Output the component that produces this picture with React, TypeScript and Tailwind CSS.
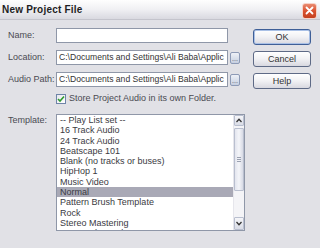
const templates = [
  "-- Play List set --",
  "16 Track Audio",
  "24 Track Audio",
  "Beatscape 101",
  "Blank (no tracks or buses)",
  "HipHop 1",
  "Music Video",
  "Normal",
  "Pattern Brush Template",
  "Rock",
  "Stereo Mastering",
  "Surround Template",
];

const path = "C:\\Documents and Settings\\Ali Baba\\Applic";

function XpButton({ label, isDefault }: { label: string; isDefault?: boolean }) {
  return (
    <div
      className={`w-[58px] h-[16px] rounded-[3px] border flex items-center justify-center text-[#333] bg-gradient-to-b from-[#ffffff] via-[#f1f1f4] to-[#d8d8e0] ${
        isDefault ? "border-[#3f5f97] shadow-[inset_0_0_0_1px_#a9c0e6]" : "border-[#5e6a86]"
      }`}
    >
      {label}
    </div>
  );
}

function BrowseButton() {
  return (
    <div className="w-[10px] h-[12px] rounded-[2px] border border-[#8d9ab6] bg-gradient-to-b from-[#eef1f7] to-[#c6cfe0] flex items-end justify-center text-[7px] leading-[7px] text-[#556] pb-[1px]">
      ...
    </div>
  );
}

function Field({ label, value, browse }: { label: string; value: string; browse?: boolean }) {
  return (
    <div className="flex items-center h-[15px]">
      <span className="w-[48px] text-[#4a4a52]">{label}</span>
      <div className="w-[172px] h-[15px] border border-[#8f97a8] bg-white flex items-center pl-[2px] overflow-hidden whitespace-nowrap text-[8.6px] text-[#333]">
        {value}
      </div>
      {browse && (
        <div className="ml-[2px]">
          <BrowseButton />
        </div>
      )}
    </div>
  );
}

export default function App() {
  return (
    <div
      className="w-[320px] h-[248px] bg-[#e1e1e6] overflow-hidden text-[9px] leading-[11px]"
      style={{ fontFamily: '"Liberation Sans", Arial, sans-serif' }}
    >
      {/* Title bar */}
      <div className="h-[20px] flex items-center justify-between pl-[2px] pr-[3px] bg-gradient-to-b from-[#fefefe] via-[#f0f0f3] to-[#d9d9e0] border-b border-[#c4c4cc]">
        <span className="text-[10px] font-bold text-[#1e1e24] tracking-[0.2px]">New Project File</span>
        <div className="w-[15px] h-[16px] mt-[2px] rounded-[3px] border border-[#f6d2c8] bg-gradient-to-b from-[#e98a6f] via-[#d9512f] to-[#c4401f] flex items-center justify-center">
          <svg width="9" height="9" viewBox="0 0 9 9">
            <path d="M1.5 1.5 L7.5 7.5 M7.5 1.5 L1.5 7.5" stroke="#fff" strokeWidth="1.8" strokeLinecap="round" />
          </svg>
        </div>
      </div>

      <div className="flex pt-[8px]">
        {/* Left column */}
        <div className="w-[253px] pl-[8px] flex flex-col">
          <div className="flex flex-col gap-[7px]">
            <Field label="Name:" value="" />
            <Field label="Location:" value={path} browse />
            <Field label="Audio Path:" value={path} browse />
          </div>

          <div className="flex items-center mt-[6px] h-[11px] pl-[48px]">
            <div className="w-[10px] h-[10px] border border-[#6f84a8] bg-gradient-to-br from-[#e6e8ee] to-[#ffffff] flex items-center justify-center">
              <svg width="8" height="8" viewBox="0 0 8 8">
                <path d="M1 4 L3 6 L7 1.5" stroke="#2e9a2e" strokeWidth="1.6" fill="none" />
              </svg>
            </div>
            <span className="ml-[3px] text-[#4a4a52]">Store Project Audio in its own Folder.</span>
          </div>

          <div className="flex mt-[10px]">
            <span className="w-[48px] pt-[1px] text-[#4a4a52]">Template:</span>
            <div className="w-[189px] h-[117px] border border-[#8f97a8] bg-white flex overflow-hidden">
              <div className="flex-1 flex flex-col overflow-hidden">
                {templates.map((t) => (
                  <div
                    key={t}
                    className={`h-[10.3px] shrink-0 leading-[10.3px] pl-[3px] whitespace-nowrap text-[#3a3a42] ${
                      t === "Normal" ? "bg-[#a9a9b6]" : ""
                    }`}
                  >
                    {t}
                  </div>
                ))}
              </div>
              {/* Scrollbar */}
              <div className="w-[11px] flex flex-col bg-[#f4f4f7] border-l border-[#e6e6ec]">
                <div className="h-[11px] border border-[#b9bfcf] rounded-[1px] bg-gradient-to-b from-[#f6f6f9] to-[#d9dce6] flex items-center justify-center">
                  <svg width="6" height="5" viewBox="0 0 6 5">
                    <path d="M0.5 4 L3 1.3 L5.5 4" stroke="#333" strokeWidth="1.3" fill="none" />
                  </svg>
                </div>
                <div className="mt-[2px] h-[63px] border border-[#b9bfcf] rounded-[1px] bg-gradient-to-r from-[#e3e5ee] via-[#f4f5f9] to-[#d7dae5] flex flex-col items-center justify-center gap-[1px]">
                  <div className="w-[4px] h-[1px] bg-[#9aa0b0]" />
                  <div className="w-[4px] h-[1px] bg-[#9aa0b0]" />
                  <div className="w-[4px] h-[1px] bg-[#9aa0b0]" />
                </div>
                <div className="flex-1" />
                <div className="h-[13px] border border-[#b9bfcf] rounded-[1px] bg-gradient-to-b from-[#f6f6f9] to-[#d9dce6] flex items-center justify-center">
                  <svg width="6" height="5" viewBox="0 0 6 5">
                    <path d="M0.5 1 L3 3.7 L5.5 1" stroke="#333" strokeWidth="1.3" fill="none" />
                  </svg>
                </div>
              </div>
            </div>
          </div>
        </div>

        {/* Buttons */}
        <div className="flex flex-col gap-[6px] pt-[1px]">
          <XpButton label="OK" isDefault />
          <XpButton label="Cancel" />
          <XpButton label="Help" />
        </div>
      </div>
    </div>
  );
}
